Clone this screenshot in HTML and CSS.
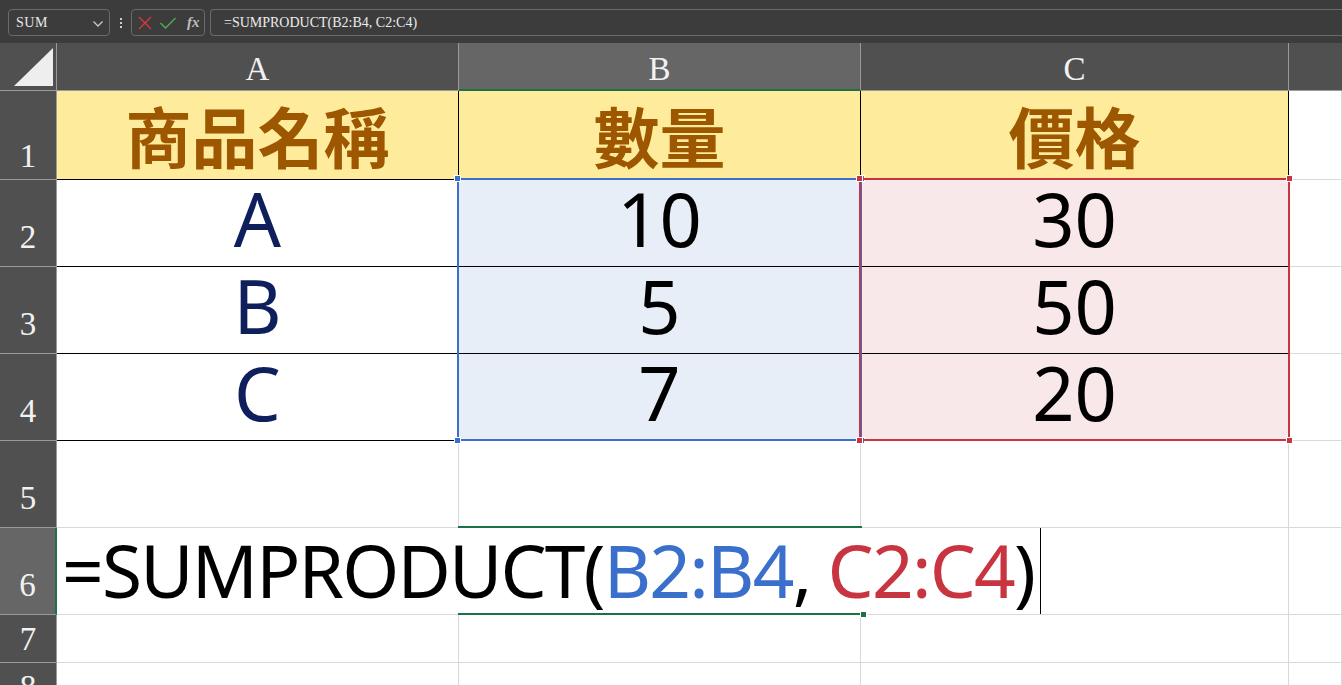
FILE: index.html
```html
<!DOCTYPE html>
<html lang="zh-Hant">
<head>
<meta charset="utf-8">
<title>SUMPRODUCT</title>
<link rel="stylesheet" href="styles.css">
</head>
<body>
<div class="app">
  <div class="toolbar">
    <div class="namebox"><span class="name">SUM</span>
      <svg class="chev" width="12" height="8" viewBox="0 0 12 8"><path d="M1.5 1.5 L6 6 L10.5 1.5" fill="none" stroke="#c8c8c8" stroke-width="1.3"/></svg>
    </div>
    <div class="dots"><i></i><i></i><i></i></div>
    <div class="fxbox">
      <svg width="16" height="16" viewBox="0 0 16 16"><path d="M2 2 L14 14 M14 2 L2 14" stroke="#d9383a" stroke-width="1.4"/></svg>
      <svg width="18" height="16" viewBox="0 0 18 16"><path d="M1.5 8 L6.5 13 L16.5 3" fill="none" stroke="#4caf50" stroke-width="1.4"/></svg>
      <span class="fx">fx</span>
    </div>
    <div class="formulabar">=SUMPRODUCT(B2:B4, C2:C4)</div>
  </div>
  <div class="sheet">
    <div class="grid">
      <div class="corner"><span class="tri"></span></div>
      <div class="colhead">A</div>
      <div class="colhead sel">B</div>
      <div class="colhead">C</div>
      <div class="colhead last"></div>

      <div class="rowhead short">1</div>
      <div class="cell title tb tr">商品名稱</div>
      <div class="cell title tb tr">數量</div>
      <div class="cell title tb tr">價格</div>
      <div class="cell"></div>

      <div class="rowhead">2</div>
      <div class="cell val letter tb">A</div>
      <div class="cell val blue tb">10</div>
      <div class="cell val red tb">30</div>
      <div class="cell"></div>

      <div class="rowhead">3</div>
      <div class="cell val letter tb">B</div>
      <div class="cell val blue tb">5</div>
      <div class="cell val red tb">50</div>
      <div class="cell"></div>

      <div class="rowhead">4</div>
      <div class="cell val letter tb">C</div>
      <div class="cell val blue tb">7</div>
      <div class="cell val red tb">20</div>
      <div class="cell"></div>

      <div class="rowhead">5</div>
      <div class="cell"></div>
      <div class="cell"></div>
      <div class="cell"></div>
      <div class="cell"></div>

      <div class="rowhead active">6</div>
      <div class="cell formula span3"><span class="ftext">=SUMPRODUCT(<span class="rb">B2:B4</span>, <span class="rr">C2:C4</span>)</span><span class="caret"></span></div>
      <div class="cell"></div>

      <div class="rowhead short">7</div>
      <div class="cell"></div>
      <div class="cell"></div>
      <div class="cell"></div>
      <div class="cell"></div>

      <div class="rowhead short">8</div>
      <div class="cell"></div>
      <div class="cell"></div>
      <div class="cell"></div>
      <div class="cell"></div>
    </div>
    <div class="selbox sel-blue"><i class="h tl"></i><i class="h tr2"></i><i class="h bl"></i><i class="h br"></i></div>
    <div class="selbox sel-red"><i class="h tl"></i><i class="h tr2"></i><i class="h bl"></i><i class="h br"></i></div>
    <div class="active-cell"><i class="h br"></i></div>
  </div>
</div>
</body>
</html>
```

FILE: styles.css
```css
* { box-sizing: border-box; }
html, body { margin: 0; padding: 0; }
body { width: 1342px; height: 685px; overflow: hidden; background: #fff; font-family: "Noto Sans", sans-serif; }
.app { width: 1342px; height: 685px; display: flex; flex-direction: column; overflow: hidden; }

.toolbar {
  height: 43px; flex-shrink: 0; background: #3c3c3c; display: flex; align-items: flex-start;
  padding: 9px 0 0 8px;
}
.namebox {
  width: 102px; height: 27px; border: 1px solid #6a6a6a; border-radius: 4px;
  display: flex; align-items: center; justify-content: space-between; padding: 0 5px 0 7px;
}
.name { font-family: "Liberation Serif", serif; font-size: 14px; color: #e8e8e8; letter-spacing: 0.5px; }
.chev { margin-top: 2px; }
.dots { width: 21px; height: 27px; display: flex; flex-direction: column; align-items: center; justify-content: center; gap: 2px; }
.dots i { width: 2px; height: 2px; background: #cfcfcf; display: block; }
.fxbox {
  width: 74px; height: 27px; border: 1px solid #6a6a6a; border-radius: 4px;
  display: flex; align-items: center; gap: 6px; padding-left: 5px;
}
.fx { font-family: "Liberation Serif", serif; font-style: italic; font-weight: bold; color: #bdbdbd; font-size: 15px; margin-left: 4px; }
.formulabar {
  margin-left: 5px; flex: 1; height: 27px; border: 1px solid #6a6a6a; border-right: none;
  border-radius: 4px 0 0 4px; display: flex; align-items: center; padding-left: 13px;
  font-family: "Liberation Serif", serif; font-size: 14px; color: #ececec;
}

.sheet { position: relative; flex: 1; overflow: hidden; }
.grid {
  display: grid;
  grid-template-columns: 57px 402px 402px 428px 1fr;
  grid-template-rows: 48px 89px 87px 87px 87px 87px 87px 48px 48px;
}
.corner { background: #505050; border-right: 1px solid #9a9a9a; border-bottom: 1px solid #9a9a9a; position: relative; }
.tri {
  position: absolute; right: 3px; bottom: 4px; width: 0; height: 0;
  border-left: 39px solid transparent; border-bottom: 38px solid #eeeeee;
}
.colhead {
  background: #505050; border-right: 1px solid #9a9a9a; border-bottom: 1px solid #9a9a9a;
  display: flex; align-items: flex-end; justify-content: center; padding-bottom: 4px;
  font-family: "Liberation Serif", serif; font-size: 33px; line-height: 1; color: #f2f2f2;
}
.colhead.sel { background: #666666; border-bottom: 2px solid #1e7145; padding-bottom: 3px; }
.colhead.last { border-right: none; }
.rowhead {
  background: #505050; border-right: 1px solid #9a9a9a; border-bottom: 1px solid #9a9a9a;
  display: flex; align-items: flex-end; justify-content: center; padding-bottom: 12px;
  font-family: "Liberation Serif", serif; font-size: 33px; line-height: 1; color: #f2f2f2;
}
.rowhead.short { padding-bottom: 6px; }
.rowhead.active { background: #666666; border-right: 2px solid #1e7145; }

.cell {
  border-right: 1px solid #d9d9d9; border-bottom: 1px solid #d9d9d9; background: #fff;
  display: flex; align-items: center; justify-content: center; white-space: nowrap;
}
.cell.tb { border-bottom-color: #000; }
.cell.tr { border-right-color: #000; }
.title {
  background: #ffeb9c; color: #9c5700; font-family: "Noto Sans CJK TC", sans-serif;
  font-weight: bold; font-size: 66px; line-height: 1; padding-bottom: 2px;
}
.val { font-size: 74px; line-height: 1; color: #000; padding-bottom: 8px; }
.letter { color: #0e1f5b; }
.blue { background: #e8eef8; }
.red { background: #f8e8e9; }
.formula {
  grid-column: span 3; justify-content: flex-start; padding-left: 5px;
  font-size: 73px; line-height: 1; color: #000; align-items: center;
}
.ftext { letter-spacing: -1.8px; white-space: pre; padding-bottom: 4px; }
.rb { color: #3a6fcc; }
.rr { color: #c8343f; }
.caret { display: block; width: 1px; height: 86px; background: #000; margin-left: 6px; }

.selbox { position: absolute; border: 2px solid; }
.sel-blue { left: 457px; top: 135px; width: 405px; height: 263px; border-color: #3a6fcc; }
.sel-red { left: 859px; top: 135px; width: 431px; height: 263px; border-color: #c8343f; }
.sel-blue .h { background: #3a6fcc; }
.sel-red .h { background: #c8343f; }
.h { position: absolute; width: 7px; height: 7px; border: 1px solid #fff; display: block; }
.h.tl { left: -5px; top: -5px; }
.h.tr2 { right: -5px; top: -5px; }
.h.bl { left: -5px; bottom: -5px; }
.h.br { right: -5px; bottom: -5px; }
.active-cell {
  position: absolute; left: 458px; top: 483px; width: 404px; height: 89px;
  border-top: 2px solid #1e7145; border-bottom: 2px solid #1e7145;
}
.active-cell .h { background: #1e7145; right: -5px; bottom: -5px; }
```
